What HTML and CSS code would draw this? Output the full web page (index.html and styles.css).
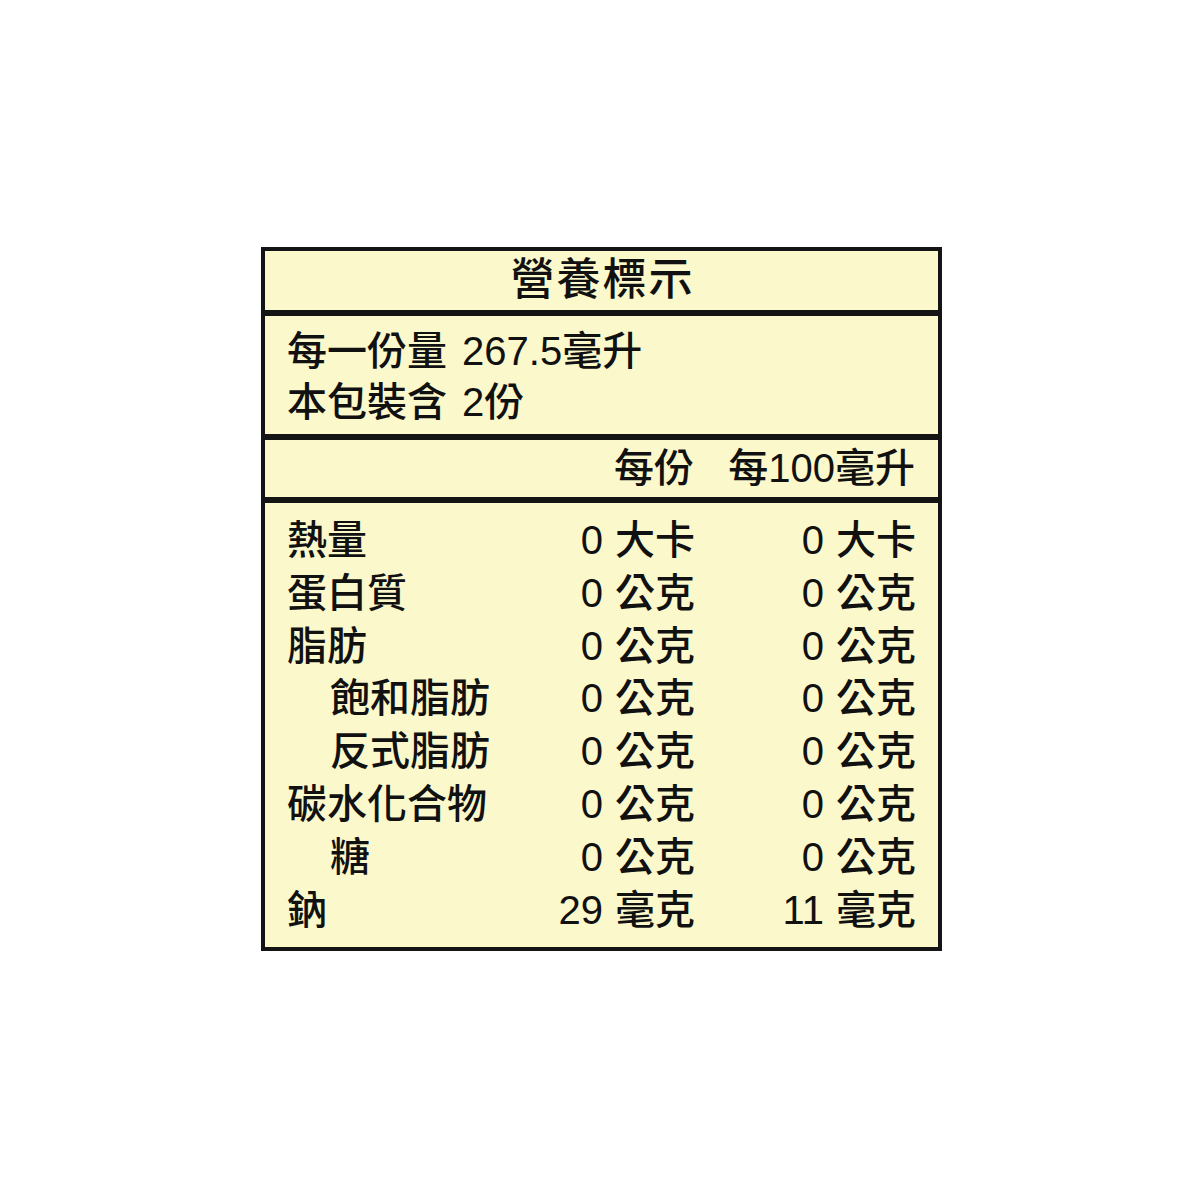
FILE: index.html
```html
<!DOCTYPE html>
<html lang="zh-Hant">
<head>
<meta charset="utf-8">
<title>營養標示</title>
<link rel="stylesheet" href="styles.css">
</head>
<body>
<div class="label">
  <div class="title">營養標示</div>
  <div class="serving">
    <div class="line">每一份量 267.5毫升</div>
    <div class="line">本包裝含 2份</div>
  </div>
  <div class="grid head">
    <div></div>
    <div class="val">每份</div>
    <div class="val">每100毫升</div>
  </div>
  <div class="grid rows">
    <div class="name">熱量</div>
    <div class="val"><span class="num">0</span><span class="unit">大卡</span></div>
    <div class="val"><span class="num">0</span><span class="unit">大卡</span></div>

    <div class="name">蛋白質</div>
    <div class="val"><span class="num">0</span><span class="unit">公克</span></div>
    <div class="val"><span class="num">0</span><span class="unit">公克</span></div>

    <div class="name">脂肪</div>
    <div class="val"><span class="num">0</span><span class="unit">公克</span></div>
    <div class="val"><span class="num">0</span><span class="unit">公克</span></div>

    <div class="name sub">飽和脂肪</div>
    <div class="val"><span class="num">0</span><span class="unit">公克</span></div>
    <div class="val"><span class="num">0</span><span class="unit">公克</span></div>

    <div class="name sub">反式脂肪</div>
    <div class="val"><span class="num">0</span><span class="unit">公克</span></div>
    <div class="val"><span class="num">0</span><span class="unit">公克</span></div>

    <div class="name">碳水化合物</div>
    <div class="val"><span class="num">0</span><span class="unit">公克</span></div>
    <div class="val"><span class="num">0</span><span class="unit">公克</span></div>

    <div class="name sub">糖</div>
    <div class="val"><span class="num">0</span><span class="unit">公克</span></div>
    <div class="val"><span class="num">0</span><span class="unit">公克</span></div>

    <div class="name">鈉</div>
    <div class="val"><span class="num">29</span><span class="unit">毫克</span></div>
    <div class="val"><span class="num">11</span><span class="unit">毫克</span></div>
  </div>
</div>
</body>
</html>
```
FILE: styles.css
```css
html, body {
  margin: 0;
  padding: 0;
  background: #ffffff;
}

body {
  padding: 247px 0 0 261px;
  font-family: "Liberation Sans", "Noto Sans CJK TC", sans-serif;
  color: #111111;
}

.label {
  box-sizing: border-box;
  width: 681px;
  height: 704px;
  border: 4px solid #141414;
  background: #fbf8cb;
  display: flex;
  flex-direction: column;
}

.title {
  height: 59px;
  display: flex;
  align-items: center;
  justify-content: center;
  font-size: 44px;
  letter-spacing: 2px;
  font-weight: 500;
  line-height: 1;
  padding-left: 2px;
}

.serving {
  border-top: 6px solid #141414;
  padding: 10px 0 0 22px;
  height: 108px;
  font-size: 40px;
  font-weight: 500;
  line-height: 51px;
  white-space: nowrap;
}

.serving .line {
  word-spacing: 4px;
}

.grid {
  display: grid;
  grid-template-columns: 1fr 205px 221px;
  padding: 0 23px 0 22px;
  border-top: 6px solid #141414;
  font-size: 40px;
  font-weight: 500;
}

.head {
  height: 57px;
  align-items: center;
  line-height: 1;
}

.rows {
  flex: 1;
  padding-top: 11px;
  padding-bottom: 11px;
  grid-auto-rows: 52.8px;
  align-items: center;
  align-content: start;
  line-height: 1;
}

.name {
  white-space: nowrap;
}

.val {
  text-align: right;
  white-space: nowrap;
}

.num {
  font-weight: 400;
  margin-right: 12px;
}

.name.sub {
  padding-left: 43px;
}
```
